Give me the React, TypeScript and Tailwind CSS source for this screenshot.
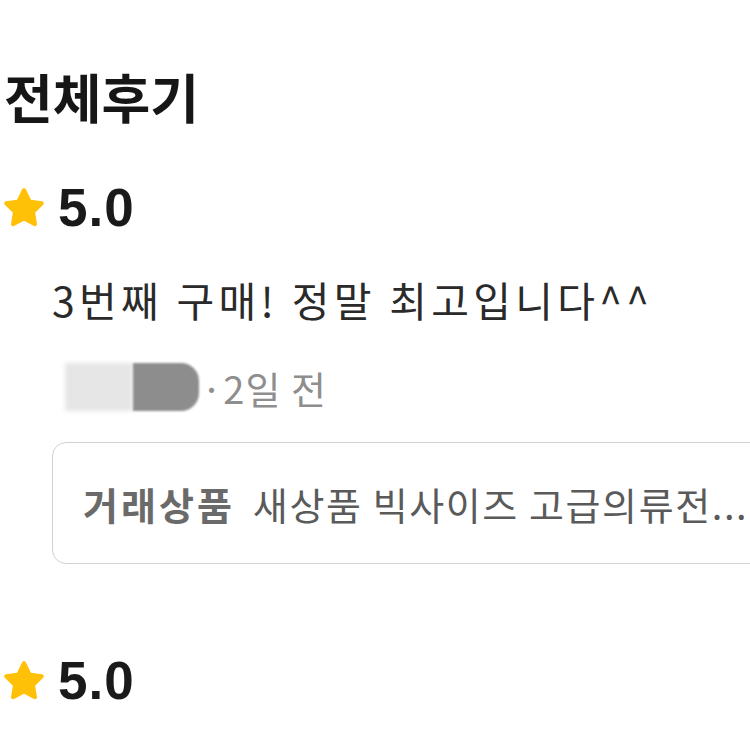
import React from "react";

const Star = () => (
  <svg width="44" height="42" viewBox="0 0 24 23" className="shrink-0">
    <path
      d="M12 1.2c.5 0 .9.3 1.1.7l2.7 5.6 6.1.9c.9.1 1.3 1.3.6 1.9l-4.4 4.3 1 6.1c.2.9-.8 1.6-1.6 1.2L12 19l-5.5 2.9c-.8.4-1.8-.3-1.6-1.2l1-6.1-4.4-4.3c-.7-.6-.3-1.8.6-1.9l6.1-.9 2.7-5.6c.2-.4.6-.7 1.1-.7z"
      fill="#FFC107"
    />
  </svg>
);

const Rating = () => (
  <div className="flex items-center gap-[12px] pl-[2px] h-[50px]">
    <Star />
    <span className="text-[53px] font-bold leading-none text-[#1a1a1a] tracking-[1px]" style={{ fontFamily: '"Liberation Sans", Arial, sans-serif' }}>
      5.0
    </span>
  </div>
);

export default function App() {
  return (
    <div
      className="w-[750px] h-[750px] overflow-hidden bg-white text-[#1a1a1a]"
      style={{ fontFamily: '"Noto Sans CJK KR", "Noto Sans", sans-serif' }}
    >
      <h1 className="pt-[60px] pl-[4px] text-[53px] font-bold leading-[72px] text-[#161616]">전체후기</h1>
      <div className="mt-[50px]">
        <Rating />
      </div>
      <p className="mt-[42px] pl-[52px] text-[41px] leading-[50px] tracking-[4.3px] text-[#2a2a2a]">3번째 구매! 정말 최고입니다^^</p>
      <div className="mt-[38px] flex items-center pl-[65px] h-[50px]">
        <div className="w-[68px] h-[48px] bg-[#e6e6e6] blur-[2px]" />
        <div className="w-[66px] h-[48px] bg-[#8d8d8d] rounded-r-[18px] blur-[1px]" />
        <span className="ml-[2px] text-[38px] tracking-[1px] text-[#8e8e8e]">·2일 전</span>
      </div>
      <div className="ml-[52px] mt-[30px] h-[122px] w-[720px] rounded-[14px] border border-[#d2d2d2] flex items-center pl-[30px]">
        <span className="text-[38px] font-bold tracking-[3px] text-[#6a6a6a]">거래상품</span>
        <span className="ml-[18px] text-[38px] tracking-[1.6px] text-[#5a5a5a] whitespace-nowrap">새상품 빅사이즈 고급의류전...</span>
      </div>
      <div className="mt-[91px]">
        <Rating />
      </div>
    </div>
  );
}
